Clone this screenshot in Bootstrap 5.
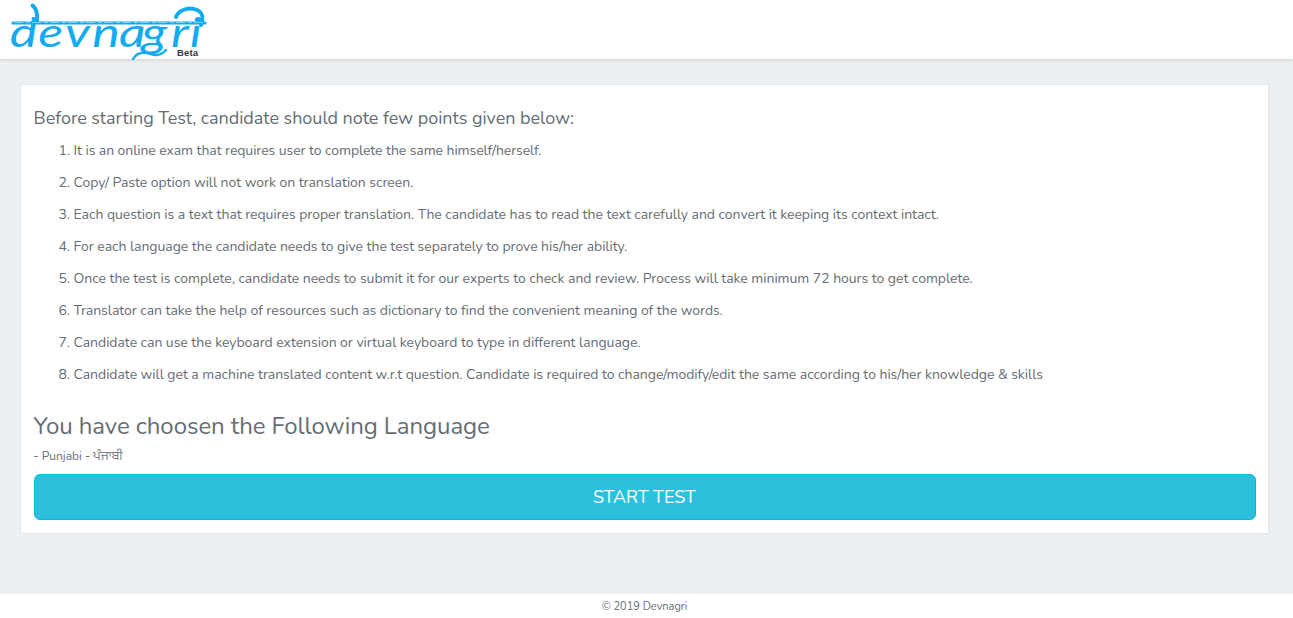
<!DOCTYPE html>
<html lang="en">
<head>
<meta charset="utf-8">
<meta name="viewport" content="width=device-width, initial-scale=1">
<title>Devnagri</title>
<link href="https://cdn.jsdelivr.net/npm/bootstrap@5.3.0/dist/css/bootstrap.min.css" rel="stylesheet">
<style>
body{background:#ecf0f3;color:#656d73;font-family:Nunito,Lato,"Noto Sans Gurmukhi",sans-serif;font-size:14px;height:618px;overflow:hidden}
.topbar{height:59px;box-shadow:0 1px 3px rgba(90,85,60,.2)}
.brand-logo{width:220px;height:66px;overflow:visible}
.panel{margin:25px 24px 0 20px;height:450px;border:1px solid #e1e6e9;border-radius:1px;padding:20px 12px 13px 12.6px}
.intro{font-size:18px;line-height:26px;letter-spacing:-.045px}
.rules{padding-left:40px;margin-top:4px;letter-spacing:-.042px}
.rules li{height:32px;line-height:32px}
.rules li:first-child{letter-spacing:-.075px}
.chosen{font-size:24px;line-height:30px;margin-top:20px;letter-spacing:-.07px}
.lang{font-size:12px;line-height:18px;height:18px;margin-top:6px}
.lang span{font-size:12.8px;line-height:1;color:#7c8388}
.btn-start{height:46px;margin-top:9px;background:#2cc0dd;border:1px solid #04b9d9;border-radius:6px;color:#fff;font-size:18px;line-height:1;padding:0 1px 0 0;letter-spacing:-.05px}
.btn-start:hover{background:#22b3d0;color:#fff}
.foot{height:24px;font-size:11px;line-height:26px;padding-right:4px}
</style>
</head>
<body class="d-flex flex-column">
<nav class="topbar bg-white position-relative flex-shrink-0">
<svg class="brand-logo d-block" viewBox="0 0 220 66" role="img" aria-label="Devnagri Beta">
<g fill="#14aaf0" font-family="Lato" font-style="italic" font-weight="400" font-size="40" transform="scale(1.3 1)">
<text x="7.500 29.500 50 71 91.500 109 131.500 146" y="47">devnagri</text></g>
<g fill="none" stroke="#14aaf0" stroke-linecap="round">
<path d="M13 23H205" stroke-width="3.200"/>
<path d="M32.500 5.500Q38 9 37 21" stroke-width="4"/>
<path d="M176 17C179 9 190 7 197 10C204 13 203 19 201 25" stroke-width="4"/>
<path d="M133 59Q138 50 151 54Q160 57 166 50" stroke-width="2.500"/>
</g>
<path d="M14 22.500H205" stroke="#7fd4fb" stroke-width=".9" stroke-dasharray="9 3 4 2"/>
<text x="177" y="56" fill="#26374b" font-family="Liberation Sans" font-weight="700" font-size="9.500" textLength="21">Beta</text>
</svg>
</nav>
<main class="flex-grow-1">
<section class="panel bg-white">
<h5 class="intro fw-normal mb-0">Before starting Test, candidate should note few points given below:</h5>
<ol class="rules mb-0">
<li>It is an online exam that requires user to complete the same himself/herself.</li>
<li>Copy/ Paste option will not work on translation screen.</li>
<li>Each question is a text that requires proper translation. The candidate has to read the text carefully and convert it keeping its context intact.</li>
<li>For each language the candidate needs to give the test separately to prove his/her ability.</li>
<li>Once the test is complete, candidate needs to submit it for our experts to check and review. Process will take minimum 72 hours to get complete.</li>
<li>Translator can take the help of resources such as dictionary to find the convenient meaning of the words.</li>
<li>Candidate can use the keyboard extension or virtual keyboard to type in different language.</li>
<li>Candidate will get a machine translated content w.r.t question. Candidate is required to change/modify/edit the same according to his/her knowledge &amp; skills</li>
</ol>
<h3 class="chosen fw-normal mb-0">You have choosen the Following Language</h3>
<div class="lang">- Punjabi - <span lang="pa">ਪੰਜਾਬੀ</span></div>
<button type="button" class="btn btn-start w-100 d-block">START TEST</button>
</section>
</main>
<footer class="foot bg-white text-center flex-shrink-0">© 2019 Devnagri</footer>
<script src="https://cdn.jsdelivr.net/npm/bootstrap@5.3.0/dist/js/bootstrap.bundle.min.js"></script>
</body>
</html>
